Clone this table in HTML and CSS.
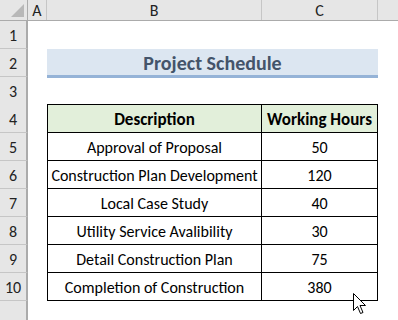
FILE: index.html
```html
<!DOCTYPE html>
<html>
<head>
<meta charset="utf-8">
<link rel="stylesheet" href="styles.css">
</head>
<body>
<div class="sheet">
  <div class="row colhead">
    <div class="corner"><span class="tri"></span></div>
    <div class="ch">A</div>
    <div class="ch">B</div>
    <div class="ch">C</div>
    <div class="ch last"></div>
  </div>
  <div class="row"><div class="rh">1</div></div>
  <div class="row"><div class="rh">2</div><div class="a"></div><div class="title">Project Schedule</div></div>
  <div class="row"><div class="rh">3</div></div>
  <div class="row thead"><div class="rh">4</div><div class="a"></div><div class="c b">Description</div><div class="c cc">Working Hours</div></div>
  <div class="row tr"><div class="rh">5</div><div class="a"></div><div class="c b">Approval of Proposal</div><div class="c cc">50</div></div>
  <div class="row tr"><div class="rh">6</div><div class="a"></div><div class="c b">Construction Plan Development</div><div class="c cc">120</div></div>
  <div class="row tr"><div class="rh">7</div><div class="a"></div><div class="c b">Local Case Study</div><div class="c cc">40</div></div>
  <div class="row tr"><div class="rh">8</div><div class="a"></div><div class="c b">Utility Service Avalibility</div><div class="c cc">30</div></div>
  <div class="row tr"><div class="rh">9</div><div class="a"></div><div class="c b">Detail Construction Plan</div><div class="c cc">75</div></div>
  <div class="row tr"><div class="rh">10</div><div class="a"></div><div class="c b">Completion of Construction</div><div class="c cc">380</div></div>
  <div class="row"><div class="rh"></div></div>
  <svg class="cursor" width="14" height="24" viewBox="0 0 14 24"><path d="M0.5 0.5 L0.5 17.5 L4.5 13.5 L7.5 20.5 L10 19.5 L7 12.5 L12.5 12.5 Z" fill="#fff" stroke="#000" stroke-width="1" stroke-linejoin="miter"/></svg>
</div>
</body>
</html>
```
FILE: styles.css
```css
* { box-sizing: border-box; }
html, body { margin: 0; padding: 0; background: #fff; }
body { width: 398px; height: 320px; overflow: hidden; font-family: Carlito, "Liberation Sans", sans-serif; color: #000; }
.sheet { position: relative; display: flex; flex-direction: column; }
.row { display: grid; grid-template-columns: 28px 19px 215px 116px 20px; height: 28px; }
.colhead { height: 21px; background: #e6e6e6; border-bottom: 1px solid #ababab; }
.corner { position: relative; border-right: 1px solid #ababab; }
.tri { position: absolute; right: 3px; bottom: 3px; width: 0; height: 0; border-left: 13px solid transparent; border-bottom: 13px solid #b8b8b8; }
.ch { font-size: 16px; color: #222; display: flex; align-items: center; justify-content: center; border-right: 1px solid #c6c6c6; }
.ch.last { border-right: none; }
.rh { background: #e6e6e6; border-right: 2px solid #ababab; border-bottom: 1px solid #c6c6c6; font-size: 16px; color: #222; display: flex; align-items: center; justify-content: center; padding-top: 2px; }
.title { grid-column: 3 / span 2; background: #dce6f1; border-bottom: 3px solid #95b3d7; margin-bottom: -1px; font-weight: bold; font-size: 20px; color: #44546a; display: flex; align-items: center; justify-content: center; padding-top: 2px; }
.c { display: flex; align-items: center; justify-content: center; font-size: 16px; border-bottom: 1px solid #000; border-right: 1px solid #000; white-space: nowrap; padding-top: 1px; }
.c.b { border-left: 1px solid #000; }
.thead .c { background: #e2efda; font-weight: bold; font-size: 17px; border-top: 1px solid #000; }
.thead { margin-top: -1px; height: 29px; }
.cursor { position: absolute; left: 353px; top: 293px; }
```
